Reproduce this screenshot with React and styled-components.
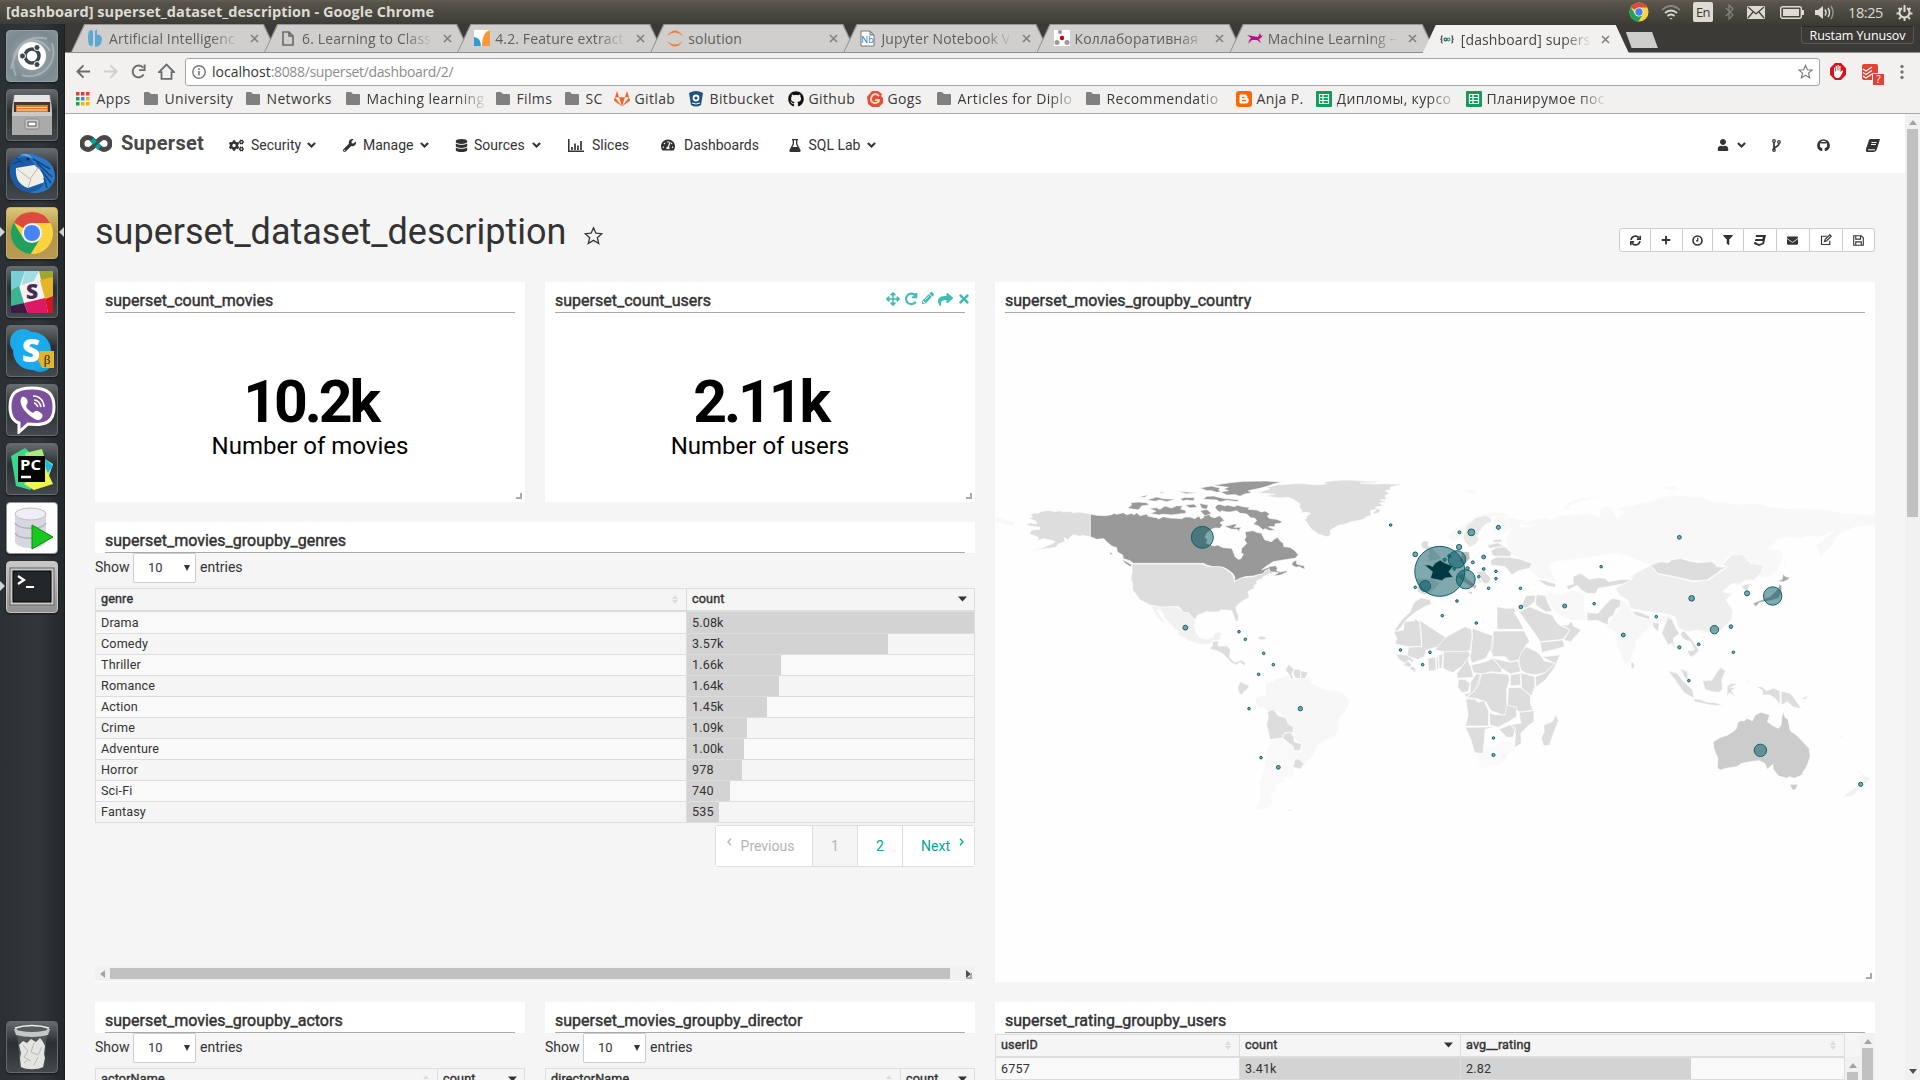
import React from 'react';
import styled, { createGlobalStyle, css } from 'styled-components';
import {
  FaCogs, FaWrench, FaDatabase, FaTachometerAlt, FaUser, FaGithub, FaPlus,
  FaFilter, FaEnvelope, FaArrowsAlt, FaPencilAlt, FaShare, FaTimes, FaGitlab,
} from 'react-icons/fa';

const GlobalStyle = createGlobalStyle`
  * { box-sizing: border-box; }
  html, body { margin: 0; padding: 0; overflow: hidden; }
  body { font-family: Roboto, "Liberation Sans", sans-serif; font-size: 14px; color: #333; background: #f5f5f5; }
  svg { display: block; flex: none; }
`;

const ui = '"Open Sans", "Noto Sans", sans-serif';

const Desktop = styled.div`
  width: 1920px; height: 1080px; display: flex; flex-direction: column; overflow: hidden;
`;

/* ---------- system panel ---------- */
const Panel = styled.header`
  height: 24px; flex: none; display: flex; align-items: center; justify-content: space-between;
  padding: 0 8px 0 6px; background: linear-gradient(#605e50 0, #56544a 3px, #3d3c37 100%);
  color: #dfdbd2; font-family: ${ui};
`;
const PanelTitle = styled.div`
  font-size: 14.5px; font-weight: 700; line-height: 24px; letter-spacing: 0.05px; white-space: pre;
`;
const Tray = styled.div`display: flex; align-items: center; height: 24px;`;
const TrayItem = styled.div`
  width: ${p => p.$w}px; display: flex; align-items: center; font-size: 14.5px; letter-spacing: -0.4px;
`;
const Lang = styled.div`
  width: 20px; height: 20px; border-radius: 2px; background: #dfdbd2; color: #3c3b37;
  font-size: 13px; line-height: 20px; text-align: center; letter-spacing: -0.6px;
`;

const Below = styled.div`flex: 1; display: flex; min-height: 0;`;

/* ---------- launcher ---------- */
const Launcher = styled.aside`
  width: 65px; flex: none; display: flex; flex-direction: column; padding: 6px 0 0;
  background: linear-gradient(90deg, #2a3033, #303639 60%, #23282a 98%, #15181a);
`;
const Slot = styled.div`
  height: 59px; flex: none; display: grid; grid-template-columns: 6px 52px 7px; align-items: start;
  ${p => p.$last && css`margin-top: auto;`}
`;
const Tile = styled.div`
  height: 52px; border-radius: 4px; border: 1px solid ${p => p.$edge || '#666b6e'};
  background: ${p => p.$bg || 'linear-gradient(#666b6d 0, #2a2f31 42%, #43494c 100%)'};
  display: flex; align-items: center; justify-content: center;
  box-shadow: 0 1px 2px #14181a;
`;
const Pip = styled.div`
  width: 0; height: 0; margin-top: 20px; border: 5px solid transparent;
  ${p => p.$side === 'left' && css`border-left-color: #cfd1d2; border-right: 0;`}
  ${p => p.$side === 'right' && css`border-right-color: #cfd1d2; border-left: 0; margin-left: 1px;`}
`;

/* ---------- browser ---------- */
const Browser = styled.main`flex: 1; min-width: 0; display: flex; flex-direction: column;`;
const TabStrip = styled.div`
  height: 29px; flex: none; background: #3b3a36; display: flex; align-items: flex-end; padding-left: 6px;
  border-bottom: 1px solid #8f8e8c;
`;
const slant = 'polygon(0 100%, 13px 0, calc(100% - 13px) 0, 100% 100%)';
const Tab = styled.div`
  position: relative; z-index: ${p => (p.$active ? 2 : 1)};
  width: 206px; height: 28px; margin-right: -12.9px; margin-bottom: ${p => (p.$active ? '-1px' : 0)};
  flex: none; display: flex; align-items: center; padding-left: 17px;
  background: ${p => (p.$active ? '#f2f1f0' : '#979694')}; clip-path: ${slant};
  font-family: ${ui}; font-size: 14px; letter-spacing: 0.12px; color: ${p => (p.$active ? '#444' : '#5f5e5c')};
  ${p => !p.$active && css`
    &::before { content: ''; position: absolute; z-index: -1; inset: 1px 1px 0 1px; background: #d1cfcd; clip-path: ${slant}; }
  `}
`;
const Favicon = styled.div`width: 21px; height: 20px; display: flex; align-items: center; flex: none;`;
const FadeText = styled.div`
  width: ${p => p.$w}px; white-space: pre; line-height: 26px; padding-top: 1px;
  ${p => p.$fade && css`mask-image: linear-gradient(90deg, #000 calc(100% - 26px), transparent calc(100% + 4px));`}
`;
const TabClose = styled.div`margin-left: 12.500px; width: 10px;`;
const NewTab = styled.div`
  width: 32px; height: 16px; margin: 0 0 4px 10px; background: #cfcdcb; clip-path: polygon(0 0, 82% 0, 100% 100%, 18% 100%);
`;
const UserBadge = styled.div`
  margin: 0 6px 8px auto; width: 113px; height: 18px; border: 1px solid #5b5a56; border-top-color: #2a2926; border-radius: 0 0 4px 4px;
  background: #3b3a36; color: #fff; font-family: ${ui}; font-size: 12.5px; line-height: 17px; text-align: center; white-space: nowrap; letter-spacing: -0.1px;
`;
const Toolbar = styled.div`
  height: 35px; flex: none; background: #f2f1f0; display: flex; align-items: center; padding: 2px 0 0 11px;
`;
const ToolIcon = styled.div`width: ${p => p.$w}px; flex: none;`;
const Omnibox = styled.div`
  width: 1635px; height: 28px; border: 1px solid #a5a4a2; border-radius: 3px; background: #fff; flex: none;
  display: flex; align-items: center; padding: 0 6px; margin-left: 1px;
  font-family: ${ui}; font-size: 14px; color: #8c8c8c; letter-spacing: -0.34px;
`;
const Url = styled.div`flex: 1; padding: 0 0 1px 6px; b { font-weight: 400; color: #333; letter-spacing: 0; }`;
const AddOn = styled.div`position: relative; margin-left: ${p => p.$ml}px;`;
const AddOnBadge = styled.div`
  position: absolute; left: 10px; top: 9px; width: 13px; height: 13px; background: #db4437; border: 1px solid #f2f1f0;
  color: #fff; font: 10px/11px ${ui}; text-align: center;
`;
const Bookmarks = styled.nav`
  height: 26px; flex: none; background: #f2f1f0; border-bottom: 1px solid #aaa9a7; display: flex; align-items: center; padding-left: 11px;
  font-family: ${ui}; font-size: 14px; letter-spacing: 0.36px; color: #3a3a3a;
`;
const Bookmark = styled.div`width: ${p => p.$w}px; flex: none; display: flex; align-items: center; margin-top: -4px;`;
const BookmarkIcon = styled.div`width: 20.5px; flex: none;`;
const Viewport = styled.div`flex: 1; min-height: 0; display: flex;`;
const Page = styled.div`flex: 1; min-width: 0; display: flex; flex-direction: column; background: #f5f5f5; overflow: hidden;`;

/* ---------- scrollbars ---------- */
const VBar = styled.div`
  width: 15px; flex: none; background: #f1f1f1; display: flex; flex-direction: column; align-items: center; padding: 6px 0;
  margin-top: ${p => p.$mt || 0}px;
`;
const VThumb = styled.div`width: 11px; height: ${p => p.$h}px; background: #c1c1c1; margin-top: 4px; flex: none;`;
const Arrow = styled.div`
  width: 0; height: 0; border: 4px solid transparent; flex: none;
  ${p => p.$dir === 'up' && css`border-bottom: 5px solid #a3a3a3; border-top: 0;`}
  ${p => p.$dir === 'down' && css`border-top: 5px solid #505050; border-bottom: 0; margin-top: auto;`}
  ${p => p.$dir === 'left' && css`border-right: 5px solid #a3a3a3; border-left: 0;`}
  ${p => p.$dir === 'right' && css`border-left: 5px solid #505050; border-right: 0;`}
`;
const HBar = styled.div`height: 15px; background: #f1f1f1; display: flex; align-items: center; padding: 0 4px 0 5px; margin-top: auto; flex: none;`;
const HThumb = styled.div`width: 840px; height: 11px; background: #c1c1c1; margin: 0 16px 0 5px;`;

/* ---------- superset nav ---------- */
const NavBar = styled.nav`
  height: 59px; flex: none; background: #fff; display: flex; align-items: center; padding: 3px 0 0 15px; color: #333;
`;
const Brand = styled.div`
  width: 149px; display: flex; align-items: center; gap: 9px; font-size: 20px; letter-spacing: 0.3px; font-weight: 700; color: #484848; margin-top: -4px;
`;
const NavItem = styled.div`width: ${p => p.$w}px; flex: none; display: flex; align-items: center; white-space: nowrap;`;
const NavIcon = styled.div`width: ${p => p.$w}px; flex: none;`;
const NavRight = styled.div`margin-left: auto; display: flex; align-items: center; padding-right: 25px;`;
const Caret = styled.div`margin-left: ${p => p.$ml || 6}px;`;

const TitleRow = styled.div`height: 109px; flex: none; display: flex; padding: 0 30px; align-items: flex-start;`;
const Title = styled.h1`margin: 38px 18px 0 0; font-size: 36px; line-height: 42px; font-weight: 400;`;
const StarBox = styled.div`margin-top: 53px;`;
const ButtonGroup = styled.div`
  display: flex; margin: 55px 0 0 auto; height: 24px; border: 1px solid #ccc; border-radius: 3px; background: #fff; overflow: hidden;
`;
const IconButton = styled.div`
  width: ${p => p.$w}px; display: flex; align-items: center; justify-content: center;
  & + & { border-left: 1px solid #ccc; padding-right: 1px; }
`;

const Board = styled.div`
  display: grid; grid-template-columns: repeat(4, 430px); grid-template-rows: 220px 460px 460px; gap: 20px; padding-left: 30px; flex: none;
`;
const Card = styled.section`
  background: #fff; grid-column: span ${p => p.$cols || 1}; grid-row: span ${p => p.$rows || 1};
  display: flex; flex-direction: column; position: relative; overflow: hidden;
`;
const CardHead = styled.div`
  height: 31px; flex: none; margin: 0 10px; border-bottom: 1px solid #aaa; display: flex; justify-content: space-between; padding-top: 10px;
  font-size: 16px; line-height: 18px; -webkit-text-stroke: 0.45px #333; white-space: nowrap;
`;
const Controls = styled.div`display: flex; gap: 4px; color: #40bcb2; margin: 0 -6px 0 0;`;
const Corner = styled.div`
  position: absolute; right: 3px; bottom: 3px; width: 6px; height: 6px; border: solid #aaa; border-width: 0 2px 2px 0;
`;
const BigNumber = styled.div`
  flex: 1; display: flex; flex-direction: column; align-items: center; color: #000; padding-top: 57px;
  strong { font-size: 59px; line-height: 64px; letter-spacing: -3.1px; margin-left: 1px; }
  span { font-size: 24px; line-height: 24px; }
`;
const TableBody = styled.div`flex: 1; min-height: 0; display: flex; flex-direction: column; background: #f5f5f5; margin-bottom: 1px;`;
const Length = styled.div`display: flex; align-items: center; height: 30px; margin-bottom: 5px; padding-bottom: 3px; flex: none;`;
const Select = styled.div`
  width: 63px; height: 30px; margin: 3px 4px 0 3.5px; background: #fff; border: 1px solid #ccc; border-radius: 2px;
  display: flex; align-items: center; justify-content: space-between; padding: 0 5px 1px 14px; font-size: 13px;
`;
const Tri = styled.i`width: 0; height: 0; border: solid transparent; border-width: 6px 3.5px 0; border-top-color: #333;`;
const Grid = styled.div`
  display: grid; grid-template-columns: ${p => p.$cols}; border: solid #ddd; border-width: 1px 1px 0 0; font-size: 12.6px; letter-spacing: 0.14px;
  flex: none; align-self: flex-start; width: ${p => p.$w}; margin-top: ${p => p.$mt || 0}px;
`;
const Th = styled.div`
  height: 23px; border: solid #ddd; border-width: 0 0 2px 1px; padding: 0 8px 3px 5px; display: flex; align-items: center; justify-content: space-between;
  -webkit-text-stroke: 0.4px #333;
  svg { position: relative; top: 1px; }
`;
const Td = styled.div`
  height: ${p => (p.$first ? 22 : 21)}px; line-height: ${p => (p.$first ? 22 : 20)}px; border: solid #ddd; border-width: 0 0 1px 1px; padding-left: 5px;
  background-color: ${p => (p.$odd ? '#f9f9f9' : '#f5f5f5')};
`;
const Pager = styled.div`
  display: flex; align-self: flex-end; margin-top: 2px; border: 1px solid #ddd; border-radius: 3px; height: 42px; background: #fff; flex: none;
`;
const PageBtn = styled.div`
  width: ${p => p.$w}px; display: flex; justify-content: center; align-items: center; gap: 9px;
  padding: 0 ${p => p.$pr || 0}px 1px ${p => p.$pl || 0}px;
  color: ${p => (p.$on ? '#00a699' : '#b4b4b4')}; background: ${p => (p.$cur ? '#f5f5f5' : '#fff')};
  & + & { border-left: 1px solid #ddd; }
  svg { margin-top: -7px; }
`;
const Split = styled.div`flex: ${p => (p.$fixed ? 'none' : 1)}; display: flex; min-height: 0; justify-content: space-between;`;

/* ---------- small glyphs ---------- */
const Stroke = ({ w, h, vb, d, c = '#333', s = 2, f = 'none', ...r }) => (
  <svg width={w} height={h || w} viewBox={vb || '0 0 16 16'} fill={f} stroke={c} strokeWidth={s} {...r}><path d={d} /></svg>
);
const Down = () => <Stroke w={9} h={6} vb="0 0 9 6" d="M.9 1 4.5 4.5 8.1 1" s={2.1} />;
const SortBoth = () => <svg width="6" height="9" viewBox="0 0 6 9" fill="#ddd"><path d="M3 0 6 4H0zM0 5h6L3 9z" /></svg>;
const SortDesc = () => <svg width="9" height="6" viewBox="0 0 9 6" fill="#333" style={{ marginRight: -1 }}><path d="M0 0.5h9L4.5 5.5z" /></svg>;
const Folder = () => <svg width="14" height="13" viewBox="0 0 14 13" fill="#808080"><path d="M0 1q0-1 1-1h4l2 2h6q1 0 1 1v9q0 1-1 1H1q-1 0-1-1z" /></svg>;
const Sheet = () => <svg width="16" height="16" viewBox="0 0 16 16"><rect width="16" height="16" rx="1" fill="#0f9d58" /><path d="M3.5 3.5h9v9h-9zM3.5 6.5h9M3.5 9.5h9M7 3.5v9" fill="none" stroke="#fff" strokeWidth="1.2" /></svg>;
const Chrome = ({ s }) => (
  <svg width={s} height={s} viewBox="0 0 48 48">
    <circle cx="24" cy="24" r="23" fill="#fdd23f" />
    <path d="M24 24 4 12.5A23 23 0 0 1 44 13H24z" fill="#dc4a3e" />
    <path d="M4 12.5A23 23 0 0 0 22.500 47L33.500 29.500 14.500 29.500z" fill="#1fa05c" />
    <circle cx="24" cy="24" r="11" fill="#f4f4f4" /><circle cx="24" cy="24" r="8.800" fill="#4585f3" />
  </svg>
);
const CloseX = () => <Stroke w={9} vb="0 0 9 9" d="M1 1 8 8M8 1 1 8" c="#848280" s={1.7} />;

const launcherItems = [
  { bg: 'radial-gradient(circle, #a9b4b9, #7c8a91 70%, #87949b)', edge: '#93a0a6', icon: (
    <svg width="50" height="50" viewBox="0 0 50 50" fill="none">
      <path d="M4 38C12 4 34 4 43 20M9 45C-2 18 22 2 40 8M45 12C52 34 32 50 15 44" stroke="#c0cacf" strokeWidth="2" opacity=".55" />
      <circle cx="25" cy="25" r="14" fill="#fff" /><circle cx="25" cy="25" r="7" stroke="#3b474c" strokeWidth="3.500" />
      <g fill="#3b474c" stroke="#fff"><circle cx="15.500" cy="25" r="3" /><circle cx="30" cy="16.500" r="3" /><circle cx="30" cy="33.500" r="3" /></g>
    </svg>) },
  { icon: (
    <svg width="44" height="46" viewBox="0 0 44 46">
      <path d="M4 3h36l2 14v20H2V17z" fill="#b9b9b9" /><path d="M5 3h34l1 8H4z" fill="#e6e6e6" /><path d="M4 10h36v10H4z" fill="#4a3526" />
      <path d="M6 13h32v8H6z" fill="#e27b28" /><path d="M7 15.500h30M7 18h30" stroke="#ffe2a8" strokeWidth="1.200" />
      <path d="M2 20h40v23H2z" fill="#aaa" /><path d="M2 20h40v4H2z" fill="#c9c9c9" />
      <rect x="15" y="27" width="14" height="10" rx="2" fill="#ccc" stroke="#888" /><rect x="18" y="30" width="8" height="4" fill="#fff" stroke="#555" />
    </svg>) },
  { icon: (
    <svg width="48" height="46" viewBox="0 0 48 46">
      <path d="M2 16C4 5 14 1 22 5c3-3 7-3 9 1 9 2 16 10 16 20 0 12-14 18-27 15C9 40 0 29 2 16z" fill="#1c5ca6" />
      <path d="m8 17 24-4 5 18-17 6C11 34 7 27 8 17z" fill="#f1eee7" /><path d="m9 18 13 10 10-14M20 37l3-9" fill="none" stroke="#b8b5ae" />
      <path d="M3 17C5 6 15 4 21 7c4 2 4 7 9 10 5 4 8 9 5 17-3 5-8 7-15 7 12 4 26-3 27-15C47 15 40 8 31 6 24 0 8 1 3 17z" fill="#2b78c7" />
      <path d="m25 8 17 10M29 12l15 14M33 19l10 13M36 27l3 10M8 7l7 5M4 13l8-3" stroke="#104783" strokeWidth="1.500" /><path d="M12 4q8-3 12 3-6-3-12-3z" fill="#6fb0ea" /><circle cx="20" cy="8" r="1.500" fill="#102b4c" />
    </svg>) },
  { bg: 'linear-gradient(#ddc779,#b2954a 45%,#b89b50)', edge: '#c9b068', left: true, right: true, icon: <Chrome s={44} /> },
  { icon: (
    <svg width="42" height="42" viewBox="0 0 42 42">
      <rect width="42" height="42" rx="3" fill="#f4f2f4" /><path d="M0 0h14l-5 15L0 19z" fill="#78d0d5" /><path d="M14 0h14l-5 10-12 4z" fill="#a4dce4" />
      <path d="M28 0h14v10l-12-1z" fill="#9da82e" /><path d="m29 9 13-3v19l-8 3z" fill="#e6b42a" /><path d="M0 19 8 15l5 17-13 4z" fill="#3eb392" />
      <path d="M0 35 13 32l4 10H0z" fill="#3b1c44" /><path d="m13 32 21-5 3 15H17z" fill="#dd1964" /><path d="m34 28 8-3v17h-5z" fill="#d01721" />
      <text x="21" y="28" fontFamily="Open Sans, sans-serif" fontWeight="800" fontSize="21" textAnchor="middle" fill="#4b2b50">S</text>
    </svg>) },
  { icon: (
    <svg width="46" height="46" viewBox="0 0 46 46">
      <circle cx="14" cy="14" r="13" fill="#1ba9e8" /><circle cx="31" cy="31" r="13" fill="#149fe0" /><circle cx="23" cy="23" r="19" fill="#1aaaed" />
      <text x="22" y="34" fontFamily="Open Sans, sans-serif" fontWeight="800" fontSize="32" textAnchor="middle" fill="#fff">S</text>
      <path d="M31 23h14v17H33l-4-8z" fill="#e2b52b" /><text x="38" y="36" fontFamily="Liberation Serif, serif" fontSize="13" textAnchor="middle" fill="#222">β</text>
    </svg>) },
  { icon: (
    <svg width="48" height="48" viewBox="0 0 48 48">
      <path d="M24 2C7 2 2 8 2 21c0 9 3 14 9 16v9l9-8c18 2 26-2 26-17C46 8 40 2 24 2z" fill="#7b519d" stroke="#fff" strokeWidth="3" />
      <path d="M14 11c4-2 7 5 5 7s0 6 6 9c3-3 4-3 9 1 2 3-2 7-5 6C18 29 9 17 14 11z" fill="#fff" />
      <path d="M25 10c7 0 11 5 11 11M26 14c4 0 6 3 7 7M26 17c2 0 3 2 4 4" fill="none" stroke="#fff" strokeWidth="1.500" />
    </svg>) },
  { icon: (
    <svg width="46" height="46" viewBox="0 0 46 46">
      <path d="m2 10 14-8 10 9-4 33-15-4z" fill="#37d78c" /><path d="m16 7 17-4 3 10 8 5-6 18-14 8z" fill="#a8ec78" /><path d="m36 13 8 7-7 9z" fill="#1cb7ec" />
      <path d="m35 19 9 19-19 6-10-6z" fill="#f2f34f" /><rect x="9" y="10" width="27" height="26" fill="#050505" />
      <text x="11" y="23.500" fontFamily="Open Sans, sans-serif" fontWeight="700" fontSize="14.500" fill="#fff" textLength="21" lengthAdjust="spacingAndGlyphs">PC</text><path d="M12 31h10" stroke="#fff" strokeWidth="2.500" />
    </svg>) },
  { bg: '#fdfdfd', edge: '#8f9395', icon: (
    <svg width="46" height="46" viewBox="0 0 46 46">
      <path d="M6 9v28c3 8 28 8 31 0V9z" fill="#d6d7e1" /><path d="M6 18c4 7 27 7 31 0M6 28c4 7 27 7 31 0" fill="none" stroke="#aeb0bd" strokeWidth="1.500" />
      <ellipse cx="21.500" cy="9" rx="15.500" ry="6" fill="#eeeef4" stroke="#bdbfca" /><path d="M23 20v24l21-12z" fill="#16c91c" stroke="#118514" />
    </svg>) },
  { bg: 'linear-gradient(#c9c9c9,#8f8f8f)', edge: '#c5c5c5', left: true, icon: (
    <svg width="46" height="40" viewBox="0 0 46 40">
      <rect x="1" y="1" width="44" height="37" fill="#c9c9c9" stroke="#666" /><rect x="4" y="4" width="38" height="31" fill="#242729" stroke="#000" />
      <path d="m9 9 6 4-6 4M17 20h8" fill="none" stroke="#fff" strokeWidth="2.200" />
    </svg>) },
];
const Trash = () => (
  <svg width="42" height="48" viewBox="0 0 42 48">
    <path d="M6 8h30l-3 36c-4 3-20 3-24 0z" fill="#5d6366" opacity=".7" />
    <path d="m8 22 4-4 4 2 4-4 5 3 4-4 3 4 2 4-1 8 1 4-2 9c-6 3-16 3-22 0l-1-9 1-5z" fill="#e3e3e1" />
    <path d="m12 22 5 6-4 6 7 4M23 20l-3 9 7 3 4-8M23 42l4-8M13 40l5-4" fill="none" stroke="#b9bab8" />
    <path d="M3 6q18-7 36 0l-2 6q-16 4-32 0z" fill="#c4c7c7" /><ellipse cx="21" cy="6" rx="15.500" ry="3" fill="#585d5f" /><path d="M4 5q17-5 34 0" fill="none" stroke="#f0f1f1" strokeWidth="1.500" />
  </svg>
);

const tabs = [
  ['Artificial Intelligenc', <svg width="14" height="18" viewBox="0 0 14 18" fill="#5da7d4"><path d="M1 2q4-3 4 2v10q0 5-4 2-2-7 0-14zM7 2l2-2v6q4-1 5 4 0 7-7 8z" /></svg>],
  ['6. Learning to Class', <Stroke w={12} h={15} vb="0 0 12 15" d="M1 1h6l4 4v9H1zM7 1v4h4" c="#6b6a68" s={1.6} style={{ marginLeft: 1 }} />],
  ['4.2. Feature extract', <svg width="16" height="16" viewBox="0 0 16 16"><path fill="#fff" d="M0 0h16v16H0z" /><path fill="#3499cd" d="M0 7q7 1 7 9H0z" /><path fill="#f89939" d="M16 0Q8 2 8 16h8z" /></svg>],
  ['solution', <svg width="16" height="17" viewBox="0 0 16 17" fill="#ef7f34"><path d="M0 6Q8-5 16 6 8-1 0 6zM0 11q8 11 16 0-8 7-16 0z" /></svg>],
  ['Jupyter Notebook V', <svg width="15" height="17" viewBox="0 0 15 17"><path d="M1 1h9l4 4v11H1zM10 1v4h4" fill="#fff" stroke="#777" /><text x="7.500" y="13" fontSize="9" fontFamily="Open Sans, sans-serif" textAnchor="middle" fill="#2a77b8">Nb</text></svg>],
  ['Коллаборативная', <svg width="16" height="16" viewBox="0 0 16 16"><path fill="#fff" d="M0 0h16v16H0z" /><g fill="#999"><circle cx="6" cy="2" r="2" /><circle cx="3" cy="12.500" r="2.500" /><circle cx="13" cy="12.500" r="2.500" /></g><circle cx="8" cy="8" r="2.200" fill="#c00" /></svg>],
  ['Machine Learning –', <svg width="16" height="11" viewBox="0 0 16 11" fill="#b5128c"><path d="m0 10 4-5-4-3 5 1 6 1 2-4 1 3 2-1-2 3-2 1 2 4-4-3-5 0-4 4 2-4z" /></svg>],
  ['[dashboard] supers', <svg width="14" height="9" viewBox="0 0 16 10" fill="none" stroke="#555" strokeWidth="1.500"><path d="M3 1Q1 1 2 4L1 5l1 1Q1 9 3 9M13 1q2 0 1 3l1 1-1 1q1 3-1 3" /><circle cx="6.200" cy="5" r="1.500" /><circle cx="9.800" cy="5" r="1.500" stroke="#2aa597" /></svg>],
];

const AppsGrid = () => (
  <svg width="14" height="14" viewBox="0 0 14 14">
    {['#e34133', '#e34133', '#e34133', '#1d9d57', '#4484f1', '#f4b400', '#1d9d57', '#f4b400', '#f4b400'].map((c, i) => (
      <rect key={i} x={(i % 3) * 5} y={Math.floor(i / 3) * 5} width="3.500" height="3.500" fill={c} />
    ))}
  </svg>
);
const bookmarks = [
  [68, 'Apps', <AppsGrid />],
  [102, 'University', <Folder />],
  [100, 'Networks', <Folder />],
  [150, 'Maching learning', <Folder />, true],
  [69, 'Films', <Folder />],
  [49, 'SC', <Folder />],
  [75, 'Gitlab', <FaGitlab size={16} color="#f0652c" />],
  [99, 'Bitbucket', <svg width="14" height="16" viewBox="0 0 14 16"><path d="M0 2Q7-2 14 2l-2 12q-5 3-10 0z" fill="#205081" /><circle cx="7" cy="7" r="2.500" fill="none" stroke="#fff" strokeWidth="1.800" /><path d="M3 12q4 2 8 0" stroke="#fff" fill="none" /></svg>],
  [79, 'Github', <FaGithub size={16} color="#111" />],
  [70, 'Gogs', <svg width="16" height="16" viewBox="0 0 16 16"><path d="M5 0h6l4 3-1 2 2 2v5l-4 4H5L1 13 0 6z" fill="#e84b3c" /><path d="M12 5Q8 1 5 5q-3 5 2 7 5 0 5-3H8" fill="none" stroke="#f6ddb9" strokeWidth="2" /></svg>],
  [149, 'Articles for Diplo', <Folder />, true],
  [150, 'Recommendatio', <Folder />, true],
  [80, 'Anja P.', <svg width="16" height="16" viewBox="0 0 16 16"><rect width="16" height="16" rx="3" fill="#f60" /><path d="M4 4h5q2 0 2 3 2 0 1 4 0 1-2 1H4zM6 6.500h2.500M6 9.700h4" fill="#fff" stroke="#fff" /><path d="M6 6.500h2.500M6 9.700h4" stroke="#f60" strokeWidth="1.300" /></svg>],
  [150, 'Дипломы, курсо', <Sheet />, true],
  [150, 'Планирумое пос', <Sheet />, true],
];

/* ---------- world map ---------- */
const N = '#ddd';
const west = [
  [N, 'M107,222 L122,219 140,222 138,214 117,205 128,201 122,195 130,189 145,190 155,184 180,181 190,185 215,182 216,186 240,184 250,188 270,186 301,192 301,260 275,256 272,260 250,254 240,262 235,270 222,262 225,275 205,282 198,292 165,296 128,301 155,294 170,288 190,280 195,275 180,270 160,266 145,272 145,262 118,252 125,240 150,238 150,232 118,228Z'],
  ['#999', 'M301,192 L320,196 345,197 365,194 372,190 380,193 400,188 410,194 425,190 432,195 440,188 450,197 470,192 475,199 500,203 505,207 520,200 540,204 560,205 575,206 585,201 600,201 615,206 622,200 630,200 632,207 640,203 645,190 640,184 652,182 662,200 675,203 688,197 697,205 703,212 690,218 698,225 690,235 675,234 665,238 650,250 645,262 652,268 650,280 672,288 682,285 700,293 725,295 730,305 735,320 745,328 753,326 760,312 753,308 755,295 763,288 770,280 763,270 768,260 765,245 790,242 800,247 815,250 820,262 825,270 845,275 852,268 862,262 870,272 880,280 882,290 900,292 915,302 925,315 915,325 880,330 850,335 830,348 815,360 835,352 850,348 848,354 838,358 850,366 840,370 815,372 790,378 765,380 733,393 735,382 728,370 712,358 700,352 668,350 650,345 640,340 430,340 420,332 400,326 398,315 382,306 380,293 365,288 350,275 342,266 320,268 301,260Z'],
  ['#999', 'M668,106 L720,98 760,94 830,93 875,96 850,102 835,108 810,115 775,122 785,128 765,132 750,139 735,134 710,135 690,125 715,122 700,117 715,112 690,109ZM630,114 L650,110 665,108 680,112 690,113 686,120 695,125 680,127 665,122 650,122ZM650,139 L670,138 700,145 745,149 743,155 710,151 690,156 680,150 640,148ZM478,175 L500,173 510,178 525,168 545,174 560,167 578,168 572,177 587,181 588,190 560,193 545,195 520,193 505,195 480,190 498,184ZM413,175 L425,165 422,158 445,156 470,158 478,165 455,168 445,180ZM440,143 L475,134 465,142ZM470,150 L500,141 520,146 558,148 530,155 510,150 495,154ZM560,124 L590,126 625,128 590,131ZM585,165 L612,162 622,172 600,174ZM628,160 L655,165 650,178 635,175ZM630,182 L650,178 665,190 645,198ZM570,147 L585,142 615,143 610,153 590,150 580,153ZM505,126 L525,127 515,130Z'],
  ['#999', 'M675,172 L682,164 690,163 705,168 712,165 735,170 740,165 760,170 778,172 775,178 800,180 815,186 825,183 840,192 832,198 838,205 860,208 878,215 870,220 855,222 855,230 835,230 857,241 840,242 825,236 820,240 805,228 790,222 800,212 795,205 782,203 770,192 750,190 740,182 722,186 710,186 695,182 690,187 680,180ZM703,228 L720,226 735,221 740,226 732,232 755,232 748,238 750,246 740,238 725,238 715,234ZM905,345 L908,336 920,330 920,342 943,348 945,358 935,354 928,350 918,352ZM835,350 L858,347 862,355 860,362 870,366 890,362 892,366 870,376 850,378 865,368 850,366 840,365ZM395,328 L415,338 425,345 422,350 405,340ZM360,306 L367,310 363,316 360,312Z'],
  [N, 'M800,128 L840,117 830,112 860,105 900,102 930,100 970,104 1010,102 1000,96 1030,92 1060,90 1100,91 1130,94 1170,94 1150,98 1110,99 1150,102 1190,101 1240,103 1215,108 1200,112 1202,119 1185,122 1198,130 1185,137 1190,148 1170,150 1190,155 1168,160 1183,166 1155,172 1172,180 1165,190 1145,192 1160,178 1140,182 1145,195 1130,200 1120,208 1100,212 1085,215 1060,224 1045,226 1025,238 1020,242 1022,252 1015,260 1005,259 985,252 980,248 965,238 955,225 950,215 943,210 950,204 948,200 962,190 948,187 935,189 935,180 928,172 930,162 910,148 895,142 870,144 840,140 820,138 855,133Z'],
  [N, 'M430,342 L638,342 650,348 668,350 690,350 702,354 722,368 730,378 733,395 752,384 765,382 790,380 805,374 818,373 825,362 835,358 840,362 838,372 822,378 815,386 800,392 800,402 790,408 795,414 773,425 776,432 778,442 762,450 745,462 738,472 740,485 745,495 745,510 740,516 735,508 730,495 725,482 710,480 690,480 690,485 665,486 650,485 640,489 622,496 616,510 605,500 595,488 580,488 572,476 565,470 515,472 480,465 472,460 450,450 440,435 428,420 428,400 423,385 427,362 425,346Z'],
  ['#f1f1f1', 'M480,465 L515,472 545,470 565,472 580,488 595,488 616,512 613,530 618,548 630,562 650,568 668,563 675,548 696,546 692,558 688,572 665,572 660,584 645,582 630,582 600,574 580,562 565,555 565,543 548,530 530,510 510,478 500,480 515,505 530,530 505,505 495,488Z'],
  [N, 'M658,596 L668,587 668,575 685,572 684,588 712,588 722,600 718,622 735,637 755,630 767,640 762,647 750,636 738,645 725,638 715,628 700,612 680,602 672,600ZM802,562 L812,558 825,560 830,566 815,570 808,568ZM743,715 L750,695 762,700 778,707 772,718 762,725 755,735 747,728ZM886,660 L896,643 912,658 905,670 910,687 905,690 898,674ZM912,657 L932,660 932,685 917,685 910,670ZM932,662 L954,667 945,687 933,685Z'],
  ['#f7f7f7', 'M826,697 L850,695 858,686 880,682 892,674 900,690 950,685 958,677 965,700 980,706 1000,718 1040,722 1065,735 1078,750 1075,770 1060,790 1048,800 1045,840 1030,865 1005,870 985,885 970,915 955,930 942,945 915,925 935,902 930,880 910,862 908,832 893,820 888,803 850,778 835,785 820,772 808,775 797,760 797,742 825,735Z'],
  [N, 'M832,785 L850,778 865,797 888,803 893,820 910,832 908,848 885,850 875,865 840,868 835,845 830,825 835,800ZM880,850 L900,845 912,862 912,875 935,882 930,902 910,902 910,890 878,865ZM915,925 L930,930 942,943 930,957 908,952ZM888,1083 L900,1078 908,1082Z'],
  ['#f9f9f9', 'M845,870 L875,866 908,890 912,902 932,904 910,935 910,955 915,972 905,982 880,985 882,998 858,1006 860,1020 848,1030 840,1042 850,1055 835,1070 825,1080 798,1077 810,1040 808,1000 825,950 828,910ZM832,1100 L850,1103 855,1106Z'],
];
const east = [
  ['#f8f8f8', 'M377,208 L395,200 420,207 460,214 468,225 450,228 425,222 432,232 455,230 440,215 500,203 515,208 545,195 560,195 630,192 655,200 655,175 678,168 690,175 705,205 725,185 700,180 720,170 760,165 775,158 800,155 840,140 870,135 900,138 950,140 975,155 1010,157 1050,163 1100,160 1135,170 1180,176 1240,175 1300,178 1350,190 1440,195 1440,225 1400,228 1380,232 1355,245 1340,250 1325,270 1318,285 1285,322 1273,285 1300,262 1320,245 1280,262 1255,258 1230,265 1190,262 1160,270 1150,285 1130,295 1165,300 1180,310 1172,340 1160,362 1140,380 1110,385 1115,355 1090,345 1060,315 1020,320 1000,350 930,332 880,325 800,345 750,325 700,310 640,320 610,325 530,335 510,345 518,370 530,395 480,385 455,360 460,340 405,315 385,270 400,240ZM548,178 L570,155 600,145 665,138 620,150 590,158 565,168 575,178ZM830,115 L850,108 870,110 885,118 860,121ZM262,120 L290,118 310,125 290,135ZM1145,148 L1180,149 1195,151 1165,152ZM1180,310 L1186,345 1180,350Z'],
  ['#f8f8f8', 'M222,262 L225,250 240,242 255,230 290,210 310,195 345,188 385,188 400,200 345,202 315,200 275,225 265,262 235,275ZM350,203 L385,195 403,240 375,252 350,245 355,220Z'],
  ['#e8e8e8', 'M265,262 L272,240 275,225 290,215 300,203 330,196 348,207 345,217 330,222 315,240 305,258 312,268 300,283 285,292 270,275Z'],
  [N, 'M350,270 L375,267 375,277 352,277ZM335,285 L365,278 385,290 360,292 340,296ZM345,302 L360,292 385,290 403,308 400,320 350,318ZM345,330 L360,321 400,322 430,328 462,340 455,355 440,358 420,364 405,375 395,362 385,350 345,345Z'],
  ['#bbb', 'M262,305 L282,305 285,325 272,342 255,335Z'],
  ['#ddd', 'M145,285 L148,276 155,272 168,274 165,286 180,297 195,315 205,325 190,330 160,335 170,325 160,318 170,312 165,300 150,295ZM133,385 L175,387 200,398 178,425 155,435 135,425Z'],
  ['#bbb', 'M245,378 L265,368 275,385 290,396 305,408 300,418 285,408 270,398ZM275,424 L292,426 290,433Z'],
  [N, 'M303,365 L325,362 345,385 340,398 325,402ZM308,380 L320,395 312,400ZM475,388 L500,392 530,402 528,412 505,408 490,398Z'],
  [N, 'M145,443 L172,450 175,462 155,470 125,490 105,508 90,530 75,545 70,540 90,510 115,485 120,470 125,458Z'],
  [N, 'M68,545 L95,540 98,515 128,512 128,505 144,520 148,590 110,590 72,582 76,565ZM140,510 L215,562 212,585 160,600 155,620 135,628 105,618 110,592 148,588Z'],
  [N, 'M72,612 L105,615 125,630 120,638 112,630 100,640 85,630ZM95,645 L108,632 120,645 112,652ZM112,655 L120,648 130,655 130,668ZM165,625 L187,622 188,660 167,664ZM189,622 L194,620 196,657 190,658ZM196,616 L208,610 205,655 197,656ZM210,605 L240,602 280,602 286,615 262,650 245,660 238,668 225,664 208,655Z'],
  [N, 'M185,600 L215,562 270,530 288,536 293,560 285,602 260,605 210,605ZM292,535 L352,558 350,595 340,605 330,625 290,640 285,620 288,605ZM362,470 L385,475 412,475 418,488 410,485 425,510 438,538 362,538ZM352,543 L440,543 455,575 445,585 435,605 425,630 400,635 385,620 350,620 345,600Z'],
  [N, 'M445,590 L475,605 490,620 497,632 527,640 500,668 470,675 445,670 430,660 422,640 430,610ZM490,620 L542,615 525,655 500,690 472,712 472,680 500,668 527,640ZM350,625 L400,637 425,632 430,665 400,672 370,652ZM288,645 L330,635 350,625 375,655 375,668 345,665 320,672 295,668ZM262,650 L285,618 280,635 288,650 295,682 250,685 248,670Z'],
  [N, 'M252,688 L270,688 285,700 280,725 262,728 250,712ZM287,695 L305,670 316,675 312,700 300,720 275,742 268,732 285,728ZM316,672 L345,668 395,673 398,690 390,715 390,760 398,785 380,795 345,782 330,755 300,745 276,743 300,720ZM400,675 L428,670 430,705 400,708ZM430,668 L470,680 470,710 460,738 432,715ZM395,713 L430,712 458,738 457,760 465,780 428,787 392,765Z'],
  [N, 'M273,746 L300,748 308,757 325,752 338,782 338,828 272,828 280,795ZM340,787 L350,793 385,795 390,765 418,772 418,800 395,815 365,832 342,825ZM425,787 L467,782 467,815 450,828 430,850 432,880 412,893 415,850 403,824 430,820ZM368,838 L400,824 415,835 408,862 390,862ZM272,832 L360,830 328,838 323,912 298,908 288,870ZM530,793 L537,812 530,830 512,885 495,888 488,865 497,845 495,825 520,815Z'],
  ['#fafafa', 'M325,885 L350,885 400,868 410,890 380,935 350,950 315,955 305,912 325,910Z'],
  [N, 'M405,895 L412,895 408,902ZM375,918 L388,916 382,924Z'],
  [N, 'M430,470 L445,437 472,435 470,455 445,475ZM474,434 L500,436 508,460 520,485 500,485 472,465ZM425,485 L455,470 500,490 520,495 530,515 540,525 570,540 550,568 485,575 470,550 445,515ZM485,577 L550,570 555,590 490,608ZM545,525 L565,525 575,513 580,528 602,540 572,575 552,570 570,540Z'],
  ['#f8f8f8', 'M500,415 L520,430 550,435 575,420 610,430 610,480 620,510 570,510 530,490 505,450Z'],
  [N, 'M560,408 L580,402 578,380 600,370 625,388 650,383 670,385 680,395 720,388 750,390 720,402 690,408 650,415 645,430 620,430 605,422 590,405 565,420ZM618,488 L650,490 670,465 690,445 715,450 720,465 700,478 695,495 680,505 678,525 650,512 620,512Z'],
  ['#eee', 'M700,415 L745,390 750,375 800,345 820,372 860,380 920,395 965,390 1020,352 1005,345 1030,315 1060,312 1085,340 1122,345 1115,370 1095,390 1070,390 1045,408 1045,400 1030,402 1005,425 1020,430 1038,425 1015,450 1035,480 1030,510 1000,540 960,548 950,543 930,540 905,545 880,535 870,500 835,490 790,485 740,475 735,450 710,435ZM945,562 L955,556 955,566Z'],
  [N, 'M800,345 L830,335 850,338 860,330 885,325 910,333 935,338 975,335 990,350 1020,352 1000,360 990,370 960,390 920,392 860,378 820,370Z'],
  ['#f7f7f7', 'M675,530 L685,518 690,500 712,480 715,450 740,465 745,485 800,503 850,495 870,510 840,520 830,512 820,530 800,530 780,550 760,570 755,600 740,635 725,642 705,590 698,545Z'],
  [N, 'M745,483 L765,485 800,500 795,508 760,497ZM805,515 L825,520 822,545 808,532ZM745,632 L755,645 750,657 744,652ZM835,540 L850,502 862,510 870,530 882,550 865,565 868,598 860,580 850,585 832,550ZM885,550 L895,542 910,560 920,572 938,602 925,615 915,622 903,602 925,600 915,575 900,570 890,565ZM885,655 L905,665 908,692 895,680ZM850,662 L875,670 895,695 920,720 923,745 895,728 870,690ZM922,747 L940,748 960,756 985,758 1010,768 970,765 925,755ZM948,692 L975,690 990,665 1000,652 1014,663 1003,688 1005,718 995,727 975,725 955,718Z'],
  [N, 'M1018,710 L1030,700 1050,700 1028,712 1042,715 1030,722 1042,740 1025,728 1018,742ZM1075,690 L1080,692 1077,702ZM1100,710 L1118,710 1130,722 1150,715 1169,722 1169,765 1155,745 1140,735 1120,735 1118,720ZM1172,723 L1198,730 1210,745 1230,777 1205,770 1190,755 1172,766ZM1225,745 L1240,742 1250,735 1243,748ZM1335,852 L1348,863 1340,860ZM1424,833 L1435,831 1428,836ZM1060,408 L1085,400 1075,425 1062,415Z'],
  ['#aaa', 'M1165,392 L1175,388 1178,372 1185,380 1198,382 1190,390 1180,395 1170,395ZM1168,402 L1174,408 1174,425 1165,445 1140,452 1110,458 1100,470 1092,460 1115,450 1140,440 1160,420Z'],
  ['#ccc', 'M978,875 L1000,862 1020,855 1035,845 1045,835 1048,820 1055,812 1068,812 1075,805 1090,812 1098,795 1115,787 1140,795 1133,815 1150,828 1165,835 1172,825 1174,800 1178,785 1184,803 1192,808 1198,842 1215,855 1230,870 1245,888 1252,895 1255,920 1245,950 1235,965 1232,975 1210,985 1195,980 1188,985 1165,978 1155,965 1150,958 1148,943 1133,958 1125,940 1110,932 1085,935 1060,940 1045,950 1015,955 1000,960 990,955 992,925 980,895ZM1197,1003 L1220,1003 1213,1020 1203,1019Z'],
  ['#f1f1f1', 'M1395,960 L1410,978 1428,985 1415,1000 1403,1003 1408,990ZM1400,1005 L1385,1030 1370,1040 1348,1042 1360,1030 1385,1012Z'],
  ['#001f25', 'M155,345 L170,345 178,350 185,340 200,330 215,340 238,348 225,365 237,382 215,384 205,392 172,385 178,365Z'],
];
const westDots = [[637, 262, 11], [586, 533, 2.4], [931, 776, 2.2], [865, 952, 1.9], [813, 923, 1.3], [777, 776, 1.3], [806, 673, 1.3], [850, 644, 1.3], [821, 610, 1.3], [766, 568, 1.3], [747, 545, 1.3], [1202, 225, 1.3]];
const eastDots = [[199, 364, 25], [248, 328, 8.7], [273, 388, 9.5], [157, 408, 5.5], [289, 247, 3.4], [254, 291, 2.6], [129, 313, 2.4], [366, 232, 2], [324, 321, 1.9], [255, 247, 1.5], [293, 337, 1.5], [278, 355, 1.7], [240, 357, 1.3], [324, 357, 1.4], [310, 380, 1.3], [359, 364, 1.3], [359, 386, 1.3], [338, 415, 1.3], [129, 412, 1.3], [248, 453, 1.3], [206, 497, 1.3], [303, 519, 1.3], [430, 471, 1.8], [429, 415, 1.3], [555, 468, 2], [639, 461, 1.3], [659, 350, 1.3], [882, 262, 1.9], [917, 445, 2.8], [1075, 430, 2.5], [1148, 438, 9.2], [982, 539, 4.2], [1029, 530, 1.8], [1036, 607, 1.3], [937, 583, 1.4], [882, 592, 1.6], [816, 500, 1.3], [722, 555, 1.9], [909, 692, 1.3], [1113, 901, 6.2], [1399, 1003, 2.1], [352, 864, 1.3], [352, 915, 1.6], [87, 600, 1.3], [171, 607, 1.3], [150, 644, 1.3], [226, 318, 1.6], [213, 329, 1.6]];
const dots = [
  ...westDots.map(([x, y, r]) => [990 + x / 3, 450 + y / 3, r]),
  ...eastDots.map(([x, y, r]) => [1370 + x / 2.851, 450 + y / 3, r]),
];
const WorldMap = () => (
  <svg width="880" height="669" viewBox="995 313 880 669">
    <rect x="995" y="313" width="880" height="669" fill="#fefefe" />
    <g transform="translate(990 450) scale(.33333)" stroke="#fefefe" strokeWidth="2">
      {west.map(([c, d], i) => <path key={i} d={d} fill={c} />)}
      <path d="M15,200 L50,210 80,215 70,225 92,238 40,222 15,215Z" fill="#f8f8f8" />
    </g>
    <g transform="translate(1370 450) scale(.35075 .33333)" stroke="#fefefe" strokeWidth="2">
      {east.map(([c, d], i) => <path key={i} d={d} fill={c} />)}
    </g>
    {dots.map(([x, y, r], i) => <circle key={i} cx={x} cy={y} r={r} fill="#00535e" fillOpacity=".5" stroke="#0d636c" />)}
  </svg>
);

const genres = [['Drama', '5.08k', 5080], ['Comedy', '3.57k', 3555], ['Thriller', '1.66k', 1670], ['Romance', '1.64k', 1625], ['Action', '1.45k', 1420], ['Crime', '1.09k', 1065], ['Adventure', '1.00k', 1010], ['Horror', '978', 978], ['Sci-Fi', '740', 762], ['Fantasy', '535', 570]];
const bar = pct => ({ backgroundImage: `linear-gradient(90deg, #d3d3d3 ${pct}%, transparent ${pct}%)` });

const Entries = () => <Length>Show<Select>10<Tri /></Select>entries</Length>;
const NameCard = ({ title, field, split }) => (
  <Card>
    <CardHead>{title}</CardHead>
    <TableBody>
      <Entries />
      <Grid $cols={`${split}px 1fr`} $w="100%"><Th>{field}<SortBoth /></Th><Th>count<SortDesc /></Th></Grid>
    </TableBody>
  </Card>
);

export default function App() {
  return (
    <Desktop>
      <GlobalStyle />
      <Panel>
        <PanelTitle>[dashboard] superset_dataset_description - Google Chrome</PanelTitle>
        <Tray>
          <TrayItem $w={32}><Chrome s={20} /></TrayItem>
          <TrayItem $w={32}><svg width="20" height="15" viewBox="0 0 20 15" fill="none" stroke="#dfdbd2" strokeWidth="1.700"><path d="M1 5Q10-3 19 5" opacity=".4" /><path d="M4 8q6-5 12 0M6.500 11q3.500-3 7 0" /><path d="m8.500 13 1.500 1.500 1.500-1.500z" fill="#dfdbd2" stroke="none" /></svg></TrayItem>
          <TrayItem $w={32}><Lang>En</Lang></TrayItem>
          <TrayItem $w={22}><Stroke w={9} h={16} vb="0 0 9 16" d="m1 4 7 7-4 4V1l4 4-7 7" c="#86847d" s={1.2} /></TrayItem>
          <TrayItem $w={33}><svg width="18" height="13" viewBox="0 0 18 13"><rect width="18" height="13" rx="1" fill="#dfdbd2" /><path d="m1 1 8 7 8-7M1 12l5-6M17 12l-5-6" fill="none" stroke="#45443f" strokeWidth="1.300" /></svg></TrayItem>
          <TrayItem $w={35}><svg width="24" height="13" viewBox="0 0 24 13"><rect x=".7" y=".7" width="20.600" height="11.600" rx="2" fill="none" stroke="#dfdbd2" strokeWidth="1.400" /><path d="M3 3h16v7H3zM22 4h2v5h-2z" fill="#dfdbd2" /></svg></TrayItem>
          <TrayItem $w={33}><svg width="20" height="15" viewBox="0 0 20 15" fill="none" stroke="#dfdbd2" strokeWidth="1.500"><path d="M0 5h3l5-4v13l-5-4H0z" fill="#dfdbd2" stroke="none" /><path d="M10 4.500q2 3 0 6M13 3q3 4.500 0 9" /><path d="M16 1q4 6.500 0 13" opacity=".5" /></svg></TrayItem>
          <TrayItem $w={48}>18:25</TrayItem>
          <TrayItem $w={16}><svg width="17" height="17" viewBox="0 0 17 17" fill="none" stroke="#dfdbd2"><path d="M6 4.200A5 5 0 1 0 11 4.200M8.500 1v7" strokeWidth="2" /><path d="M2.500 4 4 5.500M14.500 4 13 5.500M.5 9.500h3M16.500 9.500h-3M3 15l1.700-1.700M14 15l-1.700-1.700M8.500 14v3" strokeWidth="2" /></svg></TrayItem>
        </Tray>
      </Panel>
      <Below>
        <Launcher>
          {launcherItems.map((t, i) => (
            <Slot key={i}>
              <Pip $side={t.left && 'left'} /><Tile $bg={t.bg} $edge={t.edge}>{t.icon}</Tile>{t.right && <Pip $side="right" />}
            </Slot>
          ))}
          <Slot $last><Pip /><Tile><Trash /></Tile></Slot>
        </Launcher>
        <Browser>
          <TabStrip>
            {tabs.map(([t, icon], i) => (
              <Tab key={t} $active={i === 7}>
                <Favicon>{icon}</Favicon><FadeText $w={128} $fade={t.length > 10}>{t}</FadeText><TabClose><CloseX /></TabClose>
              </Tab>
            ))}
            <NewTab />
            <UserBadge>Rustam Yunusov</UserBadge>
          </TabStrip>
          <Toolbar>
            <ToolIcon $w={27}><Stroke w={15} d="M15 8H2M8 1.500 1.500 8 8 14.500" c="#6b6b6b" /></ToolIcon>
            <ToolIcon $w={28}><Stroke w={15} d="M1 8h13M8 1.500 14.500 8 8 14.500" c="#d0cfcd" /></ToolIcon>
            <ToolIcon $w={27}><Stroke w={15} d="M13.500 11.200A6.300 6.300 0 1 1 13 4M14.500.5v6H8.500" c="#6b6b6b" /></ToolIcon>
            <ToolIcon $w={26}><Stroke w={17} d="M1 8.500 8 1.500l7 7h-2.300V15H3.300V8.500z" c="#6b6b6b" s={1.7} /></ToolIcon>
            <Omnibox>
              <svg width="14" height="14" viewBox="0 0 14 14" fill="none" stroke="#777"><circle cx="7" cy="7" r="6.200" strokeWidth="1.400" /><path d="M7 6v4.500M7 3.300V5" strokeWidth="1.600" /></svg>
              <Url><b>localhost</b>:8088/superset/dashboard/2/</Url>
              <Stroke w={15} d="m8 1.500 2 4.600 5 .4-3.800 3.300 1.200 4.900L8 12.100l-4.400 2.600 1.200-4.900L1 6.500l5-.4z" c="#777" s={1.2} />
            </Omnibox>
            <AddOn $ml={10}><svg width="16" height="17" viewBox="0 0 16 16" preserveAspectRatio="none"><path d="M5 0h6l5 5v6l-5 5H5l-5-5V5z" fill="#d8121a" /><path d="M4 4.500l1-.5v4h.7V2.500h1.200V7h.6V1.800h1.200V7h.6V2.800h1.200v5.700l1.700-1.700 1 .7-2.500 5-2 1.500H6l-2-2z" fill="#fff" /></svg></AddOn>
            <AddOn $ml={16}><svg width="16" height="16" viewBox="0 0 16 16"><rect width="16" height="16" rx="2" fill="#e44332" /><path d="m1 5 3 2 6-4M1 8.500l3 2 6-4M1 12l3 2 6-4" fill="none" stroke="#fff" strokeWidth="1.300" /></svg><AddOnBadge>?</AddOnBadge></AddOn>
            <AddOn $ml={22}><svg width="4" height="16" viewBox="0 0 4 16" fill="#777"><circle cx="2" cy="2.500" r="1.700" /><circle cx="2" cy="8" r="1.700" /><circle cx="2" cy="13.500" r="1.700" /></svg></AddOn>
          </Toolbar>
          <Bookmarks>
            {bookmarks.map(([w, t, icon, fade]) => (
              <Bookmark key={t} $w={w}><BookmarkIcon>{icon}</BookmarkIcon><FadeText $w={fade ? 117 : w - 21} $fade={fade}>{t}</FadeText></Bookmark>
            ))}
          </Bookmarks>
          <Viewport>
            <Page>
              <NavBar>
                <Brand>
                  <svg width="32" height="17" viewBox="0 0 32 17" fill="none" strokeWidth="5"><path d="M16 8.500C12 3 10 2.500 8 2.500a6 6 0 0 0 0 12c3 0 5-2 8-6S21 2.500 24 2.500a6 6 0 0 1 0 12c-3 0-5-2-8-6z" stroke="#484848" /><path d="m12 4.500 3 3.500M16.500 10l3 3" stroke="#00a699" /></svg>
                  Superset
                </Brand>
                <NavItem $w={114}><NavIcon $w={22}><FaCogs size={15} /></NavIcon>Security<Caret><Down /></Caret></NavItem>
                <NavItem $w={112}><NavIcon $w={20}><FaWrench size={13} /></NavIcon>Manage<Caret $ml={7}><Down /></Caret></NavItem>
                <NavItem $w={113}><NavIcon $w={19}><FaDatabase size={13} /></NavIcon>Sources<Caret $ml={7}><Down /></Caret></NavItem>
                <NavItem $w={93}><NavIcon $w={24}><Stroke w={16} h={13} vb="0 0 16 13" d="M.7 0v12.300H16M4 8v3M7 4.500V11M10 6.500V11M13 2v9" s={1.7} /></NavIcon>Slices</NavItem>
                <NavItem $w={128}><NavIcon $w={23}><FaTachometerAlt size={14} /></NavIcon>Dashboards</NavItem>
                <NavItem $w={90}><NavIcon $w={19.5}><svg width="12" height="13" viewBox="0 0 12 13"><path d="M3 .7h6M4.300 1v4L1 11.500q0 1 1 1h8q1 0 1-1L7.700 5V1" fill="none" stroke="#333" strokeWidth="1.300" /><path d="M3 8h6l2 4H1z" fill="#333" /></svg></NavIcon>SQL Lab<Caret $ml={7}><Down /></Caret></NavItem>
                <NavRight>
                  <NavItem $w={55}><FaUser size={12} /><Caret $ml={8}><Down /></Caret></NavItem>
                  <NavItem $w={45}><svg width="9" height="13" viewBox="0 0 9 13" fill="none" stroke="#333"><path d="M2 3v8M7 4q.3 3-5 5" strokeWidth="1.700" /><circle cx="2" cy="2" r="1.300" strokeWidth="1.200" /><circle cx="7" cy="3" r="1.300" strokeWidth="1.200" /><circle cx="2" cy="11" r="1.300" strokeWidth="1.200" /></svg></NavItem>
                  <NavItem $w={49}><Stroke w={13} h={13} vb="0 0 14 14" d="M4.800 13v-2.500Q2 10 2.200 6.500L3 3l2 1h4l2-1 .8 3.500Q12 10 9.200 10.500V13M4.800 12Q1 11 1 7a6 6 0 0 1 12 0q0 4-3.800 5" s={1.7} /></NavItem>
                  <svg width="14" height="13" viewBox="0 0 14 13"><path d="M4 0h10l-3 10q-1 3-3 3H1q-2-1-1-3L3 1z" fill="#333" /><path d="M5.500 3.500h5M5 5.500h5M2 10.800h7" stroke="#fff" strokeWidth="1" /></svg>
                </NavRight>
              </NavBar>
              <TitleRow>
                <Title>superset_dataset_description</Title>
                <StarBox><Stroke w={19} d="m8 1.500 2 4.600 5 .4-3.800 3.300 1.200 4.900L8 12.100l-4.400 2.600 1.200-4.900L1 6.500l5-.4z" s={1.1} /></StarBox>
                <ButtonGroup>
                  <IconButton $w={30}><Stroke w={11} d="M1.500 7A6.500 6.500 0 0 1 13 4M15 1v5h-5M14.500 9A6.500 6.500 0 0 1 3 12M1 15v-5h5" s={2.5} /></IconButton>
                  <IconButton $w={32}><FaPlus size={10} /></IconButton>
                  <IconButton $w={30}><svg width="11" height="11" viewBox="0 0 11 11" fill="none" stroke="#333"><circle cx="5.500" cy="5.500" r="4.500" strokeWidth="1.600" /><path d="M5.700 2.800v3H4" strokeWidth="1.200" /></svg></IconButton>
                  <IconButton $w={31}><FaFilter size={10} /></IconButton>
                  <IconButton $w={33}><svg width="12" height="11" viewBox="0 0 12 11"><path d="M2 0h10l-2 9-5 2-5-2 .5-2h2l-.2 1 3 1 3-1 .4-2H1l.4-2h7l.3-2h-7z" fill="#333" /></svg></IconButton>
                  <IconButton $w={33}><FaEnvelope size={11} /></IconButton>
                  <IconButton $w={33}><Stroke w={12} d="M13 9v5H2V3h7M6 10l1-3 6-6 2 2-6 6z" s={1.6} /></IconButton>
                  <IconButton $w={32}><Stroke w={11} d="M1 1h11l3 3v11H1zM4 1v5h7V1M4 15v-5h8v5" s={1.6} /></IconButton>
                </ButtonGroup>
              </TitleRow>
              <Board>
                <Card><CardHead>superset_count_movies</CardHead><BigNumber><strong>10.2k</strong><span>Number of movies</span></BigNumber><Corner /></Card>
                <Card>
                  <CardHead>superset_count_users
                    <Controls>
                      <FaArrowsAlt size={14} /><Stroke w={14} d="M13.500 11A6 6 0 1 1 13 4M14 1v5H9" c="#40bcb2" s={2.4} /><FaPencilAlt size={12} /><FaShare size={15} /><FaTimes size={14} />
                    </Controls>
                  </CardHead>
                  <BigNumber><strong>2.11k</strong><span>Number of users</span></BigNumber><Corner />
                </Card>
                <Card $cols={2} $rows={2}><CardHead>superset_movies_groupby_country</CardHead><WorldMap /><Corner /></Card>
                <Card $cols={2}>
                  <CardHead>superset_movies_groupby_genres</CardHead>
                  <TableBody>
                    <Entries />
                    <Grid $cols="591px 1fr" $w="100%">
                      <Th>genre<SortBoth /></Th><Th>count<SortDesc /></Th>
                      {genres.map(([g, label, v], i) => (
                        <React.Fragment key={g}>
                          <Td $first={!i} $odd={i % 2 === 0}>{g}</Td>
                          <Td $first={!i} $odd={i % 2 === 0} style={bar((v / 5080) * 100)}>{label}</Td>
                        </React.Fragment>
                      ))}
                    </Grid>
                    <Pager>
                      <PageBtn $w={96} $pr={7}><Stroke w={5} h={8} vb="0 0 5 8" d="M4 .8 1 4l3 3.200" c="#b4b4b4" s={1.3} />Previous</PageBtn>
                      <PageBtn $w={45} $cur>1</PageBtn><PageBtn $w={45} $on>2</PageBtn>
                      <PageBtn $w={72} $on $pl={8}>Next<Stroke w={5} h={8} vb="0 0 5 8" d="m1 .8 3 3.200-3 3.200" c="#00a699" s={1.3} /></PageBtn>
                    </Pager>
                    <HBar><Arrow $dir="left" /><HThumb /><Arrow $dir="right" /></HBar>
                  </TableBody>
                  <Corner />
                </Card>
                <NameCard title="superset_movies_groupby_actors" field="actorName" split={342} />
                <NameCard title="superset_movies_groupby_director" field="directorName" split={355} />
                <Card $cols={2}>
                  <CardHead>superset_rating_groupby_users</CardHead>
                  <TableBody>
                    <Split>
                      <Grid $cols="244px 221px 384px" $w="850px" $mt={1}>
                        <Th>userID<SortBoth /></Th><Th>count<SortDesc /></Th><Th>avg__rating<SortBoth /></Th>
                        <Td $first $odd>6757</Td><Td $first $odd style={bar(100)}>3.41k</Td><Td $first $odd style={bar(60)}>2.82</Td>
                      </Grid>
                      <Split $fixed>
                        <VBar $mt={24}><Arrow $dir="up" /><VThumb $h={300} /></VBar>
                        <VBar><Arrow $dir="up" /><VThumb $h={300} /></VBar>
                      </Split>
                    </Split>
                  </TableBody>
                </Card>
              </Board>
            </Page>
            <VBar><Arrow $dir="up" /><VThumb $h={388} /><Arrow $dir="down" /></VBar>
          </Viewport>
        </Browser>
      </Below>
    </Desktop>
  );
}
